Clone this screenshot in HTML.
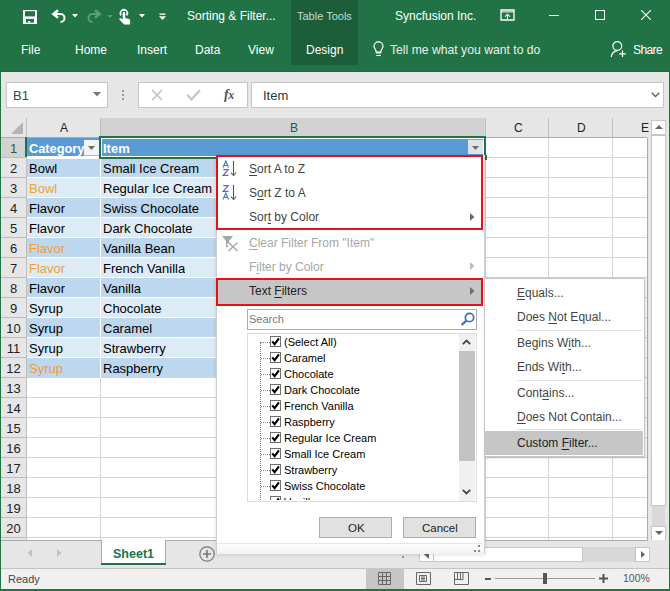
<!DOCTYPE html>
<html><head><meta charset="utf-8">
<style>
*{box-sizing:border-box;margin:0;padding:0}
html,body{width:670px;height:591px;overflow:hidden;background:#217346;font-family:"Liberation Sans",sans-serif}
.a{position:absolute}
.t{position:absolute;white-space:nowrap;line-height:1}
#rib{left:0;top:0;width:670px;height:72px;background:#217346;color:#fff}
#fb{left:1px;top:72px;width:668px;height:46px;background:#e6e6e6}
#hdr{left:1px;top:118px;width:668px;height:20px;background:#e6e6e6}
#grid{left:1px;top:138px;width:668px;height:402px;background:#fff}
.hl{position:absolute;height:1px;background:#d4d4d4}
.vl{position:absolute;width:1px;background:#d4d4d4}
.rn{position:absolute;left:1px;width:25px;height:20px;font-size:13px;color:#222;text-align:center;line-height:20px}
.cell{position:absolute;height:19px;font-size:13px;line-height:19px;color:#000;padding-left:2px;white-space:nowrap;overflow:hidden}
.dk{background:#bdd7ee}.lt{background:#ddebf7}
.or{color:#f0a030}
.mi{position:absolute;left:249px;font-size:12px;color:#444;white-space:nowrap;line-height:14px}
.dis{color:#a6a6a6}
.u{text-decoration:underline;text-underline-offset:2px}
.chk{position:absolute;left:270px;width:11px;height:11px;border:1px solid #707070;background:#fff}
.cl{position:absolute;left:284px;font-size:11px;line-height:12px;color:#000;white-space:nowrap}
.sm{position:absolute;left:517px;font-size:12px;color:#444;line-height:14px;white-space:nowrap}
</style></head><body>
<!-- ribbon -->
<div id="rib" class="a">
  <div class="a" style="left:291px;top:0;width:67px;height:65px;background:#1c5e39"></div>
  <div class="a" style="left:0;top:71px;width:670px;height:1px;background:#1c6a3f"></div>
  <!-- save icon -->
  <svg class="a" style="left:23px;top:10px" width="14" height="14" viewBox="0 0 14 14"><rect width="14" height="14" fill="#fff"/><rect x="2" y="1.2" width="10" height="5.2" fill="#217346"/><rect x="3" y="8.9" width="8" height="3.7" fill="#217346"/><rect x="5.1" y="11" width="1.9" height="1.6" fill="#fff"/></svg>
  <!-- undo -->
  <svg class="a" style="left:51px;top:9px" width="16" height="15" viewBox="0 0 16 15"><path d="M4 5H9.5a4 4 0 0 1 0 8" fill="none" stroke="#fff" stroke-width="2"/><path d="M7 1.3L2.4 5 7 8.7" stroke="#fff" stroke-width="2.5" fill="none"/></svg>
  <svg class="a" style="left:72px;top:14px" width="6" height="4" viewBox="0 0 6 4"><path d="M0 0h6l-3 3.5z" fill="#fff"/></svg>
  <!-- redo disabled -->
  <svg class="a" style="left:86px;top:9px" width="16" height="15" viewBox="0 0 16 15"><path d="M12 5H6.5a4 4 0 0 0 0 8" fill="none" stroke="#5e9c78" stroke-width="2"/><path d="M9 1.3L13.6 5 9 8.7" stroke="#5e9c78" stroke-width="2.5" fill="none"/></svg>
  <svg class="a" style="left:107px;top:15px" width="6" height="3" viewBox="0 0 6 3"><path d="M0 0h6l-3 3z" fill="#5e9c78"/></svg>
  <!-- touch -->
  <svg class="a" style="left:114px;top:6px" width="22" height="22" viewBox="0 0 22 22"><path d="M7.4 9.4A3.3 3.3 0 1 1 12.4 9.4" fill="none" stroke="#fff" stroke-width="1.9"/><rect x="7.6" y="5.2" width="4.6" height="9" fill="#217346"/><path d="M8.7 13V7.2a1.25 1.25 0 0 1 2.5 0V12.1l3.9 1c.7.2 1 .7 1 1.4V18.6H10L5 12.9l1.3-.8 2.4 1.3z" fill="#fff"/></svg>
  <svg class="a" style="left:139px;top:14px" width="6" height="4" viewBox="0 0 6 4"><path d="M0 0h6l-3 3.5z" fill="#fff"/></svg>
  <!-- customize -->
  <svg class="a" style="left:159px;top:13px" width="7" height="8" viewBox="0 0 7 8"><rect x="0.5" y="0.5" width="6" height="1.3" fill="#fff"/><path d="M0 3.3h7l-3.5 3.7z" fill="#fff"/></svg>
  <div class="t" style="left:187px;top:10px;font-size:12px">Sorting &amp; Filter...</div>
  <div class="t" style="left:297px;top:11px;font-size:11px;color:#c5dccd">Table Tools</div>
  <div class="t" style="left:395px;top:10px;font-size:12px">Syncfusion Inc.</div>
  <!-- window controls -->
  <svg class="a" style="left:500px;top:9px" width="15" height="12" viewBox="0 0 15 12"><path d="M1 1h13v10H1z" fill="none" stroke="#fff" stroke-width="1.3"/><path d="M1 2.9h13" stroke="#fff" stroke-width="1"/><path d="M7.5 11V5.2M5 7.7l2.5-2.5 2.5 2.5" fill="none" stroke="#fff" stroke-width="1.1"/></svg>
  <div class="a" style="left:549px;top:15px;width:10px;height:1px;background:#fff"></div>
  <div class="a" style="left:595px;top:10px;width:10px;height:10px;border:1px solid #fff"></div>
  <svg class="a" style="left:641px;top:10px" width="10" height="10" viewBox="0 0 10 10"><path d="M0 0l10 10M10 0L0 10" stroke="#fff" stroke-width="1.1"/></svg>
  <!-- tabs -->
  <div class="t" style="left:21px;top:44px;font-size:12px">File</div>
  <div class="t" style="left:75px;top:44px;font-size:12px">Home</div>
  <div class="t" style="left:137px;top:44px;font-size:12px">Insert</div>
  <div class="t" style="left:195px;top:44px;font-size:12px">Data</div>
  <div class="t" style="left:248px;top:44px;font-size:12px">View</div>
  <div class="t" style="left:306px;top:44px;font-size:12px">Design</div>
  <svg class="a" style="left:373px;top:41px" width="11" height="16" viewBox="0 0 11 16"><path d="M3.2 11.5V10.5C3.2 8.8 1 7.5 1 5.3a4.5 4.5 0 0 1 9 0c0 2.2-2.2 3.5-2.2 5.2v1z" fill="none" stroke="#fff" stroke-width="1.2"/><rect x="3" y="10.5" width="5" height="2" fill="#fff"/><path d="M3.2 14.5h4.6" stroke="#fff" stroke-width="1.1"/></svg>
  <div class="t" style="left:390px;top:44px;font-size:12.2px;color:#e8f0eb">Tell me what you want to do</div>
  <svg class="a" style="left:610px;top:40px" width="17" height="18" viewBox="0 0 17 18"><circle cx="7.3" cy="6" r="4.4" fill="none" stroke="#fff" stroke-width="1.2"/><path d="M1.2 17c.5-3.5 3-6 6.5-6.3" fill="none" stroke="#fff" stroke-width="1.2"/><path d="M12.5 10.5v6.5M9.2 13.8h6.6" stroke="#fff" stroke-width="1.2"/></svg>
  <div class="t" style="left:633px;top:44px;font-size:12px;letter-spacing:-0.6px">Share</div>
</div>

<!-- formula bar -->
<div id="fb" class="a"></div>
<div class="a" style="left:6px;top:82px;width:102px;height:26px;background:#fff;border:1px solid #c6c6c6"></div>
<div class="t" style="left:13px;top:89px;font-size:13px;color:#444">B1</div>
<svg class="a" style="left:93px;top:92px" width="8" height="5" viewBox="0 0 8 5"><path d="M0 0h8L4 4.5z" fill="#777"/></svg>
<div class="a" style="left:122px;top:90px;width:2px;height:2px;background:#999"></div>
<div class="a" style="left:122px;top:94px;width:2px;height:2px;background:#999"></div>
<div class="a" style="left:122px;top:98px;width:2px;height:2px;background:#999"></div>
<div class="a" style="left:138px;top:82px;width:110px;height:26px;background:#fff;border:1px solid #c6c6c6"></div>
<svg class="a" style="left:151px;top:89px" width="12" height="12" viewBox="0 0 12 12"><path d="M1 1l10 10M11 1L1 11" stroke="#c4c4c4" stroke-width="1.7"/></svg>
<svg class="a" style="left:186px;top:89px" width="15" height="12" viewBox="0 0 15 12"><path d="M1.2 5.8l4.3 4.6L14 1.2" fill="none" stroke="#c8c8c8" stroke-width="2.4"/></svg>
<div class="t" style="left:224px;top:87px;font:italic bold 14px 'Liberation Serif',serif;color:#555;letter-spacing:-0.5px">f<span style="font-size:12px">x</span></div>
<div class="a" style="left:251px;top:82px;width:413px;height:26px;background:#fff;border:1px solid #c6c6c6"></div>
<div class="t" style="left:263px;top:89px;font-size:13px;color:#333">Item</div>
<svg class="a" style="left:651px;top:92px" width="9" height="6" viewBox="0 0 9 6"><path d="M.7 .7l3.8 3.8L8.3 .7" fill="none" stroke="#666" stroke-width="1.5"/></svg>

<!-- column headers -->
<div id="hdr" class="a"></div>
<svg class="a" style="left:11px;top:122px" width="13" height="12" viewBox="0 0 13 12"><path d="M12 0v12H0z" fill="#b5b5b5"/></svg>
<div class="a" style="left:26px;top:118px;width:1px;height:20px;background:#c0c0c0"></div>
<div class="a" style="left:100px;top:118px;width:385px;height:19px;background:#d2d2d2"></div>
<div class="a" style="left:100px;top:118px;width:1px;height:20px;background:#c0c0c0"></div>
<div class="a" style="left:485px;top:118px;width:1px;height:20px;background:#c0c0c0"></div>
<div class="a" style="left:548px;top:118px;width:1px;height:20px;background:#c0c0c0"></div>
<div class="a" style="left:612px;top:118px;width:1px;height:20px;background:#c0c0c0"></div>
<div class="a" style="left:1px;top:137px;width:647px;height:1px;background:#ababab"></div>
<div class="t" style="left:60px;top:122px;font-size:12px;color:#222">A</div>
<div class="t" style="left:290px;top:122px;font-size:12px;color:#1e5c3a">B</div>
<div class="t" style="left:514px;top:122px;font-size:12px;color:#222">C</div>
<div class="t" style="left:577px;top:122px;font-size:12px;color:#222">D</div>
<div class="t" style="left:641px;top:122px;font-size:12px;color:#222;z-index:5">E</div>

<!-- grid body -->
<div id="grid" class="a"></div>
<div class="hl" style="left:27px;top:157px;width:621px"></div>
<div class="hl" style="left:27px;top:177px;width:621px"></div>
<div class="hl" style="left:27px;top:197px;width:621px"></div>
<div class="hl" style="left:27px;top:217px;width:621px"></div>
<div class="hl" style="left:27px;top:237px;width:621px"></div>
<div class="hl" style="left:27px;top:257px;width:621px"></div>
<div class="hl" style="left:27px;top:277px;width:621px"></div>
<div class="hl" style="left:27px;top:297px;width:621px"></div>
<div class="hl" style="left:27px;top:317px;width:621px"></div>
<div class="hl" style="left:27px;top:337px;width:621px"></div>
<div class="hl" style="left:27px;top:357px;width:621px"></div>
<div class="hl" style="left:27px;top:377px;width:621px"></div>
<div class="hl" style="left:27px;top:397px;width:621px"></div>
<div class="hl" style="left:27px;top:417px;width:621px"></div>
<div class="hl" style="left:27px;top:437px;width:621px"></div>
<div class="hl" style="left:27px;top:457px;width:621px"></div>
<div class="hl" style="left:27px;top:477px;width:621px"></div>
<div class="hl" style="left:27px;top:497px;width:621px"></div>
<div class="hl" style="left:27px;top:517px;width:621px"></div>
<div class="hl" style="left:27px;top:537px;width:621px"></div>
<div class="vl" style="left:100px;top:138px;height:402px"></div>
<div class="vl" style="left:485px;top:138px;height:402px"></div>
<div class="vl" style="left:548px;top:138px;height:402px"></div>
<div class="vl" style="left:612px;top:138px;height:402px"></div>
<div class="a" style="left:1px;top:138px;width:25px;height:19px;background:#d2d2d2"></div>
<div class="a" style="left:1px;top:157px;width:25px;height:1px;background:#bdbdbd"></div>
<div class="rn" style="top:139px;color:#1e5c3a">1</div>
<div class="a" style="left:1px;top:158px;width:25px;height:19px;background:#e6e6e6"></div>
<div class="a" style="left:1px;top:177px;width:25px;height:1px;background:#bdbdbd"></div>
<div class="rn" style="top:159px">2</div>
<div class="a" style="left:1px;top:178px;width:25px;height:19px;background:#e6e6e6"></div>
<div class="a" style="left:1px;top:197px;width:25px;height:1px;background:#bdbdbd"></div>
<div class="rn" style="top:179px">3</div>
<div class="a" style="left:1px;top:198px;width:25px;height:19px;background:#e6e6e6"></div>
<div class="a" style="left:1px;top:217px;width:25px;height:1px;background:#bdbdbd"></div>
<div class="rn" style="top:199px">4</div>
<div class="a" style="left:1px;top:218px;width:25px;height:19px;background:#e6e6e6"></div>
<div class="a" style="left:1px;top:237px;width:25px;height:1px;background:#bdbdbd"></div>
<div class="rn" style="top:219px">5</div>
<div class="a" style="left:1px;top:238px;width:25px;height:19px;background:#e6e6e6"></div>
<div class="a" style="left:1px;top:257px;width:25px;height:1px;background:#bdbdbd"></div>
<div class="rn" style="top:239px">6</div>
<div class="a" style="left:1px;top:258px;width:25px;height:19px;background:#e6e6e6"></div>
<div class="a" style="left:1px;top:277px;width:25px;height:1px;background:#bdbdbd"></div>
<div class="rn" style="top:259px">7</div>
<div class="a" style="left:1px;top:278px;width:25px;height:19px;background:#e6e6e6"></div>
<div class="a" style="left:1px;top:297px;width:25px;height:1px;background:#bdbdbd"></div>
<div class="rn" style="top:279px">8</div>
<div class="a" style="left:1px;top:298px;width:25px;height:19px;background:#e6e6e6"></div>
<div class="a" style="left:1px;top:317px;width:25px;height:1px;background:#bdbdbd"></div>
<div class="rn" style="top:299px">9</div>
<div class="a" style="left:1px;top:318px;width:25px;height:19px;background:#e6e6e6"></div>
<div class="a" style="left:1px;top:337px;width:25px;height:1px;background:#bdbdbd"></div>
<div class="rn" style="top:319px">10</div>
<div class="a" style="left:1px;top:338px;width:25px;height:19px;background:#e6e6e6"></div>
<div class="a" style="left:1px;top:357px;width:25px;height:1px;background:#bdbdbd"></div>
<div class="rn" style="top:339px">11</div>
<div class="a" style="left:1px;top:358px;width:25px;height:19px;background:#e6e6e6"></div>
<div class="a" style="left:1px;top:377px;width:25px;height:1px;background:#bdbdbd"></div>
<div class="rn" style="top:359px">12</div>
<div class="a" style="left:1px;top:378px;width:25px;height:19px;background:#e6e6e6"></div>
<div class="a" style="left:1px;top:397px;width:25px;height:1px;background:#bdbdbd"></div>
<div class="rn" style="top:379px">13</div>
<div class="a" style="left:1px;top:398px;width:25px;height:19px;background:#e6e6e6"></div>
<div class="a" style="left:1px;top:417px;width:25px;height:1px;background:#bdbdbd"></div>
<div class="rn" style="top:399px">14</div>
<div class="a" style="left:1px;top:418px;width:25px;height:19px;background:#e6e6e6"></div>
<div class="a" style="left:1px;top:437px;width:25px;height:1px;background:#bdbdbd"></div>
<div class="rn" style="top:419px">15</div>
<div class="a" style="left:1px;top:438px;width:25px;height:19px;background:#e6e6e6"></div>
<div class="a" style="left:1px;top:457px;width:25px;height:1px;background:#bdbdbd"></div>
<div class="rn" style="top:439px">16</div>
<div class="a" style="left:1px;top:458px;width:25px;height:19px;background:#e6e6e6"></div>
<div class="a" style="left:1px;top:477px;width:25px;height:1px;background:#bdbdbd"></div>
<div class="rn" style="top:459px">17</div>
<div class="a" style="left:1px;top:478px;width:25px;height:19px;background:#e6e6e6"></div>
<div class="a" style="left:1px;top:497px;width:25px;height:1px;background:#bdbdbd"></div>
<div class="rn" style="top:479px">18</div>
<div class="a" style="left:1px;top:498px;width:25px;height:19px;background:#e6e6e6"></div>
<div class="a" style="left:1px;top:517px;width:25px;height:1px;background:#bdbdbd"></div>
<div class="rn" style="top:499px">19</div>
<div class="a" style="left:1px;top:518px;width:25px;height:19px;background:#e6e6e6"></div>
<div class="a" style="left:1px;top:537px;width:25px;height:1px;background:#bdbdbd"></div>
<div class="rn" style="top:519px">20</div>
<div class="a" style="left:1px;top:538px;width:25px;height:2px;background:#e6e6e6"></div>
<div class="a" style="left:26px;top:138px;width:1px;height:402px;background:#bdbdbd"></div>
<div class="a" style="left:25px;top:137px;width:2px;height:20px;background:#217346"></div>
<div class="a" style="left:27px;top:138px;width:458px;height:240px;background:#fff"></div>
<div class="a" style="left:27px;top:138px;width:73px;height:18px;background:#5b9bd5"></div>
<div class="a" style="left:101px;top:138px;width:384px;height:18px;background:#5b9bd5"></div>
<div class="cell" style="left:27px;top:139px;color:#fff;font-weight:bold;font-size:12.8px">Category</div>
<div class="cell" style="left:101px;top:139px;color:#fff;font-weight:bold;font-size:13px">Item</div>
<div class="a dk" style="left:27px;top:159px;width:73px;height:18px"></div>
<div class="a dk" style="left:101px;top:159px;width:384px;height:18px"></div>
<div class="cell" style="left:27px;top:159px">Bowl</div>
<div class="cell" style="left:101px;top:159px">Small Ice Cream</div>
<div class="a lt" style="left:27px;top:178px;width:73px;height:19px"></div>
<div class="a lt" style="left:101px;top:178px;width:384px;height:19px"></div>
<div class="cell or" style="left:27px;top:179px">Bowl</div>
<div class="cell" style="left:101px;top:179px">Regular Ice Cream</div>
<div class="a dk" style="left:27px;top:198px;width:73px;height:19px"></div>
<div class="a dk" style="left:101px;top:198px;width:384px;height:19px"></div>
<div class="cell" style="left:27px;top:199px">Flavor</div>
<div class="cell" style="left:101px;top:199px">Swiss Chocolate</div>
<div class="a lt" style="left:27px;top:218px;width:73px;height:19px"></div>
<div class="a lt" style="left:101px;top:218px;width:384px;height:19px"></div>
<div class="cell" style="left:27px;top:219px">Flavor</div>
<div class="cell" style="left:101px;top:219px">Dark Chocolate</div>
<div class="a dk" style="left:27px;top:238px;width:73px;height:19px"></div>
<div class="a dk" style="left:101px;top:238px;width:384px;height:19px"></div>
<div class="cell or" style="left:27px;top:239px">Flavor</div>
<div class="cell" style="left:101px;top:239px">Vanilla Bean</div>
<div class="a lt" style="left:27px;top:258px;width:73px;height:19px"></div>
<div class="a lt" style="left:101px;top:258px;width:384px;height:19px"></div>
<div class="cell or" style="left:27px;top:259px">Flavor</div>
<div class="cell" style="left:101px;top:259px">French Vanilla</div>
<div class="a dk" style="left:27px;top:278px;width:73px;height:19px"></div>
<div class="a dk" style="left:101px;top:278px;width:384px;height:19px"></div>
<div class="cell" style="left:27px;top:279px">Flavor</div>
<div class="cell" style="left:101px;top:279px">Vanilla</div>
<div class="a lt" style="left:27px;top:298px;width:73px;height:19px"></div>
<div class="a lt" style="left:101px;top:298px;width:384px;height:19px"></div>
<div class="cell" style="left:27px;top:299px">Syrup</div>
<div class="cell" style="left:101px;top:299px">Chocolate</div>
<div class="a dk" style="left:27px;top:318px;width:73px;height:19px"></div>
<div class="a dk" style="left:101px;top:318px;width:384px;height:19px"></div>
<div class="cell" style="left:27px;top:319px">Syrup</div>
<div class="cell" style="left:101px;top:319px">Caramel</div>
<div class="a lt" style="left:27px;top:338px;width:73px;height:19px"></div>
<div class="a lt" style="left:101px;top:338px;width:384px;height:19px"></div>
<div class="cell" style="left:27px;top:339px">Syrup</div>
<div class="cell" style="left:101px;top:339px">Strawberry</div>
<div class="a dk" style="left:27px;top:358px;width:73px;height:20px"></div>
<div class="a dk" style="left:101px;top:358px;width:384px;height:20px"></div>
<div class="cell or" style="left:27px;top:359px">Syrup</div>
<div class="cell" style="left:101px;top:359px">Raspberry</div>
<!-- vertical scrollbar -->
<div class="a" style="left:647px;top:118px;width:22px;height:423px;background:#e6e6e6"></div>
<div class="a" style="left:652px;top:505px;width:13px;height:21px;background:#d9d9d9"></div>
<div class="a" style="left:647px;top:138px;width:1px;height:403px;background:#ababab"></div>
<div class="a" style="left:651px;top:120px;width:15px;height:15px;background:#fff;border:1px solid #c6c6c6"></div>
<svg class="a" style="left:655px;top:125px" width="8" height="4" viewBox="0 0 8 4"><path d="M0 4h8L4 0z" fill="#666"/></svg>
<div class="a" style="left:651px;top:135px;width:15px;height:371px;background:#fff;border:1px solid #c6c6c6"></div>
<div class="a" style="left:651px;top:526px;width:15px;height:15px;background:#fff;border:1px solid #c6c6c6"></div>
<svg class="a" style="left:655px;top:531px" width="8" height="4" viewBox="0 0 8 4"><path d="M0 0h8L4 4z" fill="#666"/></svg>

<!-- sheet tab bar -->
<div class="a" style="left:1px;top:540px;width:668px;height:28px;background:#e6e6e6"></div>
<div class="a" style="left:1px;top:540px;width:647px;height:1px;background:#ababab"></div>
<svg class="a" style="left:27px;top:549px" width="5" height="8" viewBox="0 0 5 8"><path d="M5 0L.5 4 5 8z" fill="#c0c0c0"/></svg>
<svg class="a" style="left:57px;top:549px" width="5" height="8" viewBox="0 0 5 8"><path d="M0 0l4.5 4L0 8z" fill="#c0c0c0"/></svg>
<div class="a" style="left:101px;top:540px;width:65px;height:25px;background:#fff;border:1px solid #ababab;border-top:none;border-bottom:none"></div>
<div class="a" style="left:101px;top:563px;width:65px;height:2px;background:#217346"></div>
<div class="t" style="left:113px;top:548px;font-size:12.5px;font-weight:bold;color:#217346">Sheet1</div>
<svg class="a" style="left:199px;top:546px" width="16" height="16" viewBox="0 0 16 16"><circle cx="8" cy="8" r="7.2" fill="none" stroke="#777" stroke-width="1.2"/><path d="M8 4v8M4 8h8" stroke="#777" stroke-width="1.6"/></svg>
<div class="a" style="left:402px;top:556px;width:2px;height:2px;background:#999"></div>
<!-- horizontal scrollbar -->
<div class="a" style="left:419px;top:547px;width:15px;height:15px;background:#fff;border:1px solid #c6c6c6"></div>
<div class="a" style="left:433px;top:547px;width:150px;height:15px;background:#fff;border:1px solid #c6c6c6"></div>
<svg class="a" style="left:424px;top:550px" width="5" height="9" viewBox="0 0 5 9"><path d="M5 0L0 4.5 5 9z" fill="#666"/></svg>
<div class="a" style="left:583px;top:547px;width:52px;height:15px;background:#d8d8d8"></div>
<div class="a" style="left:635px;top:547px;width:15px;height:15px;background:#fff;border:1px solid #c6c6c6"></div>
<svg class="a" style="left:641px;top:551px" width="4" height="7" viewBox="0 0 4 7"><path d="M0 0l4 3.5L0 7z" fill="#666"/></svg>

<!-- status bar -->
<div class="a" style="left:1px;top:568px;width:668px;height:1px;background:#c4c4c4"></div>
<div class="a" style="left:1px;top:569px;width:668px;height:20px;background:#f0f0f0"></div>
<div class="t" style="left:8px;top:574px;font-size:11px;color:#444">Ready</div>
<div class="a" style="left:366px;top:568px;width:38px;height:21px;background:#c6c6c6"></div>
<svg class="a" style="left:378px;top:572px" width="13" height="13" viewBox="0 0 13 13"><path d="M.5 .5h12v12H.5zM4.5 .5v12M8.5 .5v12M.5 4.5h12M.5 8.5h12" fill="none" stroke="#666" stroke-width="1"/></svg>
<svg class="a" style="left:416px;top:572px" width="15" height="13" viewBox="0 0 15 13"><path d="M.5 .5h14v12H.5z" fill="none" stroke="#666"/><path d="M3.5 3.5h7v6h-7z" fill="none" stroke="#666"/><path d="M5 5h4M5 6.5h4M5 8h4" stroke="#666"/></svg>
<svg class="a" style="left:454px;top:572px" width="15" height="13" viewBox="0 0 15 13"><path d="M.5 12.5V.5h14v12zM.5 7.5h8.5M3.5 .5v7M6.5 .5v7M9 .5v7" fill="none" stroke="#666"/></svg>
<div class="a" style="left:485px;top:578px;width:6px;height:2px;background:#555"></div>
<div class="a" style="left:495px;top:578px;width:100px;height:1px;background:#999"></div>
<div class="a" style="left:543px;top:573px;width:4px;height:11px;background:#555"></div>
<svg class="a" style="left:599px;top:574px" width="9" height="9" viewBox="0 0 9 9"><path d="M4.5 0v9M0 4.5h9" stroke="#555" stroke-width="2"/></svg>
<div class="t" style="left:623px;top:573px;font-size:10.5px;color:#555">100%</div>

<!-- selection border B1 -->
<div class="a" style="left:99px;top:136px;width:387px;height:23px;border:2px solid #217346"></div>
<div class="a" style="left:101px;top:138px;width:383px;height:19px;border:1px solid #fff"></div>
<div class="a" style="left:482px;top:155px;width:5px;height:5px;background:#217346"></div>
<!-- filter buttons -->
<div class="a" style="left:84px;top:140px;width:15px;height:16px;background:#f3f4f7;border-bottom:1px solid #b8b8b8"></div>
<svg class="a" style="left:88px;top:146px" width="7" height="4" viewBox="0 0 7 4"><path d="M0 0h7L3.5 4z" fill="#6b6b6b"/></svg>
<div class="a" style="left:468px;top:139px;width:15px;height:15px;background:#e0e3e8;border-top:1px solid #9a9a9a"></div>
<svg class="a" style="left:472px;top:146px" width="7" height="4" viewBox="0 0 7 4"><path d="M0 0h7L3.5 4z" fill="#6b6b6b"/></svg>

<!-- dropdown panel -->
<div class="a" style="left:216px;top:155px;width:269px;height:399px;background:linear-gradient(#fff 0,#fff 385px,#f2f2f2 399px);border:1px solid #d0d0d0;border-bottom:none;box-shadow:0 1px 4px rgba(0,0,0,0.12)"></div>
<div class="a" style="left:216px;top:155px;width:267px;height:75px;border:2px solid #e3101e"></div>
<!-- AZ icon -->
<svg class="a" style="left:222px;top:160px" width="16" height="17" viewBox="0 0 16 17"><path d="M1 7.5L3.8 1 6.6 7.5M1.9 5.4h3.8" fill="none" stroke="#4a80c4" stroke-width="1.2"/><path d="M1.2 9.6h5L1.2 15.4h5.2" fill="none" stroke="#7d5fa8" stroke-width="1.2"/><path d="M11.5 1v14.5M8.8 12.5l2.7 3 2.7-3" fill="none" stroke="#555" stroke-width="1.1"/></svg>
<svg class="a" style="left:222px;top:184px" width="16" height="17" viewBox="0 0 16 17"><path d="M1.2 1.6h5L1.2 7.4h5.2" fill="none" stroke="#7d5fa8" stroke-width="1.2"/><path d="M1 15.5L3.8 9 6.6 15.5M1.9 13.4h3.8" fill="none" stroke="#4a80c4" stroke-width="1.2"/><path d="M11.5 1v14.5M8.8 12.5l2.7 3 2.7-3" fill="none" stroke="#555" stroke-width="1.1"/></svg>
<div class="mi" style="top:162px"><span class="u">S</span>ort A to Z</div>
<div class="mi" style="top:186px">S<span class="u">o</span>rt Z to A</div>
<div class="mi" style="top:210px">Sor<span class="u">t</span> by Color</div>
<svg class="a" style="left:470px;top:213px" width="5" height="8" viewBox="0 0 5 8"><path d="M0 0l4.5 4L0 8z" fill="#6e6e6e"/></svg>
<!-- clear filter -->
<svg class="a" style="left:222px;top:236px" width="16" height="16" viewBox="0 0 16 16"><path d="M0 0h11L7 5v2H4V5z" fill="#a6a6a6"/><path d="M4.6 7v3.5h1.5M6.5 6.5l9 8.5M15.5 6.5l-9 8.5" stroke="#a6a6a6" stroke-width="1.4" fill="none"/></svg>
<div class="mi dis" style="top:236px"><span class="u">C</span>lear Filter From "Item"</div>
<div class="mi dis" style="top:260px">F<span class="u">i</span>lter by Color</div>
<svg class="a" style="left:470px;top:262px" width="5" height="8" viewBox="0 0 5 8"><path d="M0 0l4.5 4L0 8z" fill="#bbb"/></svg>
<div class="a" style="left:216px;top:278px;width:267px;height:28px;background:#c6c6c6;border:2px solid #e3101e"></div>
<div class="mi" style="top:284px;color:#222">Text <span class="u">F</span>ilters</div>
<svg class="a" style="left:470px;top:287px" width="5" height="8" viewBox="0 0 5 8"><path d="M0 0l4.5 4L0 8z" fill="#6e6e6e"/></svg>
<!-- search -->
<div class="a" style="left:247px;top:309px;width:230px;height:21px;border:1px solid #ababab;background:#fff"></div>
<div class="t" style="left:249px;top:314px;font-size:11px;color:#777">Search</div>
<svg class="a" style="left:460px;top:312px" width="15" height="14" viewBox="0 0 15 14"><circle cx="9.5" cy="5.5" r="4.2" fill="none" stroke="#3e6fa8" stroke-width="1.7"/><path d="M6.5 8.5L1.5 13" stroke="#3e6fa8" stroke-width="2.3"/></svg>
<!-- list -->
<div class="a" style="left:247px;top:333px;width:230px;height:169px;border:1px solid #dcdcdc;background:#fff;overflow:hidden">
  <div class="a" style="left:12px;top:8px;width:0;height:170px;border-left:1px dotted #808080"></div>
</div>
<div class="a" style="left:248px;top:334px;width:211px;height:166px;overflow:hidden"><div style="position:absolute;left:-248px;top:-334px;width:670px;height:591px"><div class="a" style="left:261px;top:342px;width:9px;height:0;border-top:1px dotted #808080"></div>
<div class="chk" style="top:336px"></div>
<svg class="a" style="left:271px;top:337px" width="9" height="9" viewBox="0 0 9 9"><path d="M1.3 4.3L3.6 7.2L7.9 1.3" fill="none" stroke="#000" stroke-width="2.1"/></svg>
<div class="cl" style="top:336px">(Select All)</div>
<div class="a" style="left:261px;top:358px;width:9px;height:0;border-top:1px dotted #808080"></div>
<div class="chk" style="top:352px"></div>
<svg class="a" style="left:271px;top:353px" width="9" height="9" viewBox="0 0 9 9"><path d="M1.3 4.3L3.6 7.2L7.9 1.3" fill="none" stroke="#000" stroke-width="2.1"/></svg>
<div class="cl" style="top:352px">Caramel</div>
<div class="a" style="left:261px;top:374px;width:9px;height:0;border-top:1px dotted #808080"></div>
<div class="chk" style="top:368px"></div>
<svg class="a" style="left:271px;top:369px" width="9" height="9" viewBox="0 0 9 9"><path d="M1.3 4.3L3.6 7.2L7.9 1.3" fill="none" stroke="#000" stroke-width="2.1"/></svg>
<div class="cl" style="top:368px">Chocolate</div>
<div class="a" style="left:261px;top:390px;width:9px;height:0;border-top:1px dotted #808080"></div>
<div class="chk" style="top:384px"></div>
<svg class="a" style="left:271px;top:385px" width="9" height="9" viewBox="0 0 9 9"><path d="M1.3 4.3L3.6 7.2L7.9 1.3" fill="none" stroke="#000" stroke-width="2.1"/></svg>
<div class="cl" style="top:384px">Dark Chocolate</div>
<div class="a" style="left:261px;top:406px;width:9px;height:0;border-top:1px dotted #808080"></div>
<div class="chk" style="top:400px"></div>
<svg class="a" style="left:271px;top:401px" width="9" height="9" viewBox="0 0 9 9"><path d="M1.3 4.3L3.6 7.2L7.9 1.3" fill="none" stroke="#000" stroke-width="2.1"/></svg>
<div class="cl" style="top:400px">French Vanilla</div>
<div class="a" style="left:261px;top:422px;width:9px;height:0;border-top:1px dotted #808080"></div>
<div class="chk" style="top:416px"></div>
<svg class="a" style="left:271px;top:417px" width="9" height="9" viewBox="0 0 9 9"><path d="M1.3 4.3L3.6 7.2L7.9 1.3" fill="none" stroke="#000" stroke-width="2.1"/></svg>
<div class="cl" style="top:416px">Raspberry</div>
<div class="a" style="left:261px;top:438px;width:9px;height:0;border-top:1px dotted #808080"></div>
<div class="chk" style="top:432px"></div>
<svg class="a" style="left:271px;top:433px" width="9" height="9" viewBox="0 0 9 9"><path d="M1.3 4.3L3.6 7.2L7.9 1.3" fill="none" stroke="#000" stroke-width="2.1"/></svg>
<div class="cl" style="top:432px">Regular Ice Cream</div>
<div class="a" style="left:261px;top:454px;width:9px;height:0;border-top:1px dotted #808080"></div>
<div class="chk" style="top:448px"></div>
<svg class="a" style="left:271px;top:449px" width="9" height="9" viewBox="0 0 9 9"><path d="M1.3 4.3L3.6 7.2L7.9 1.3" fill="none" stroke="#000" stroke-width="2.1"/></svg>
<div class="cl" style="top:448px">Small Ice Cream</div>
<div class="a" style="left:261px;top:470px;width:9px;height:0;border-top:1px dotted #808080"></div>
<div class="chk" style="top:464px"></div>
<svg class="a" style="left:271px;top:465px" width="9" height="9" viewBox="0 0 9 9"><path d="M1.3 4.3L3.6 7.2L7.9 1.3" fill="none" stroke="#000" stroke-width="2.1"/></svg>
<div class="cl" style="top:464px">Strawberry</div>
<div class="a" style="left:261px;top:486px;width:9px;height:0;border-top:1px dotted #808080"></div>
<div class="chk" style="top:480px"></div>
<svg class="a" style="left:271px;top:481px" width="9" height="9" viewBox="0 0 9 9"><path d="M1.3 4.3L3.6 7.2L7.9 1.3" fill="none" stroke="#000" stroke-width="2.1"/></svg>
<div class="cl" style="top:480px">Swiss Chocolate</div>
<div class="a" style="left:261px;top:502px;width:9px;height:0;border-top:1px dotted #808080"></div>
<div class="chk" style="top:496px"></div>
<svg class="a" style="left:271px;top:497px" width="9" height="9" viewBox="0 0 9 9"><path d="M1.3 4.3L3.6 7.2L7.9 1.3" fill="none" stroke="#000" stroke-width="2.1"/></svg>
<div class="cl" style="top:496px">Vanilla</div></div></div>
<!-- list scrollbar -->
<div class="a" style="left:459px;top:334px;width:16px;height:167px;background:#f0f0f0"></div>
<div class="a" style="left:459px;top:351px;width:16px;height:110px;background:#c2c2c2"></div>
<svg class="a" style="left:462px;top:339px" width="9" height="6" viewBox="0 0 9 6"><path d="M.8 5.2L4.5 1.5l3.7 3.7" fill="none" stroke="#444" stroke-width="1.8"/></svg>
<svg class="a" style="left:462px;top:489px" width="9" height="6" viewBox="0 0 9 6"><path d="M.8 .8l3.7 3.7 3.7-3.7" fill="none" stroke="#444" stroke-width="1.8"/></svg>
<!-- buttons -->
<div class="a" style="left:319px;top:517px;width:73px;height:21px;background:#e1e1e1;border:1px solid #adadad"></div>
<div class="t" style="left:348px;top:523px;font-size:11.5px;color:#222">OK</div>
<div class="a" style="left:403px;top:517px;width:73px;height:21px;background:#e1e1e1;border:1px solid #adadad"></div>
<div class="t" style="left:422px;top:523px;font-size:11.5px;color:#222">Cancel</div>
<div class="a" style="left:217px;top:543px;width:266px;height:1px;background:#e3e8ee"></div>
<svg class="a" style="left:473px;top:545px" width="8" height="8" viewBox="0 0 8 8"><rect x="5" y="0" width="2" height="2" fill="#888"/><rect x="1" y="5" width="2" height="2" fill="#888"/><rect x="5" y="5" width="2" height="2" fill="#888"/></svg>

<!-- submenu -->
<div class="a" style="left:484px;top:278px;width:161px;height:179px;background:#fff;border:1px solid #c6c6c6;box-shadow:1px 1px 3px rgba(0,0,0,0.15)"></div>
<div class="sm" style="top:286px"><span class="u">E</span>quals...</div>
<div class="sm" style="top:310px">Does <span class="u">N</span>ot Equal...</div>
<div class="a" style="left:517px;top:330px;width:125px;height:1px;background:#e1e1e1"></div>
<div class="sm" style="top:336px">Begins W<span class="u">i</span>th...</div>
<div class="sm" style="top:360px">Ends Wi<span class="u">t</span>h...</div>
<div class="a" style="left:517px;top:380px;width:125px;height:1px;background:#e1e1e1"></div>
<div class="sm" style="top:386px">Cont<span class="u">a</span>ins...</div>
<div class="sm" style="top:410px"><span class="u">D</span>oes Not Contain...</div>
<div class="a" style="left:517px;top:429px;width:125px;height:1px;background:#e1e1e1"></div>
<div class="a" style="left:485px;top:431px;width:158px;height:24px;background:#c6c6c6"></div>
<div class="sm" style="top:436px;color:#222">Custom <span class="u">F</span>ilter...</div>


</body></html>
